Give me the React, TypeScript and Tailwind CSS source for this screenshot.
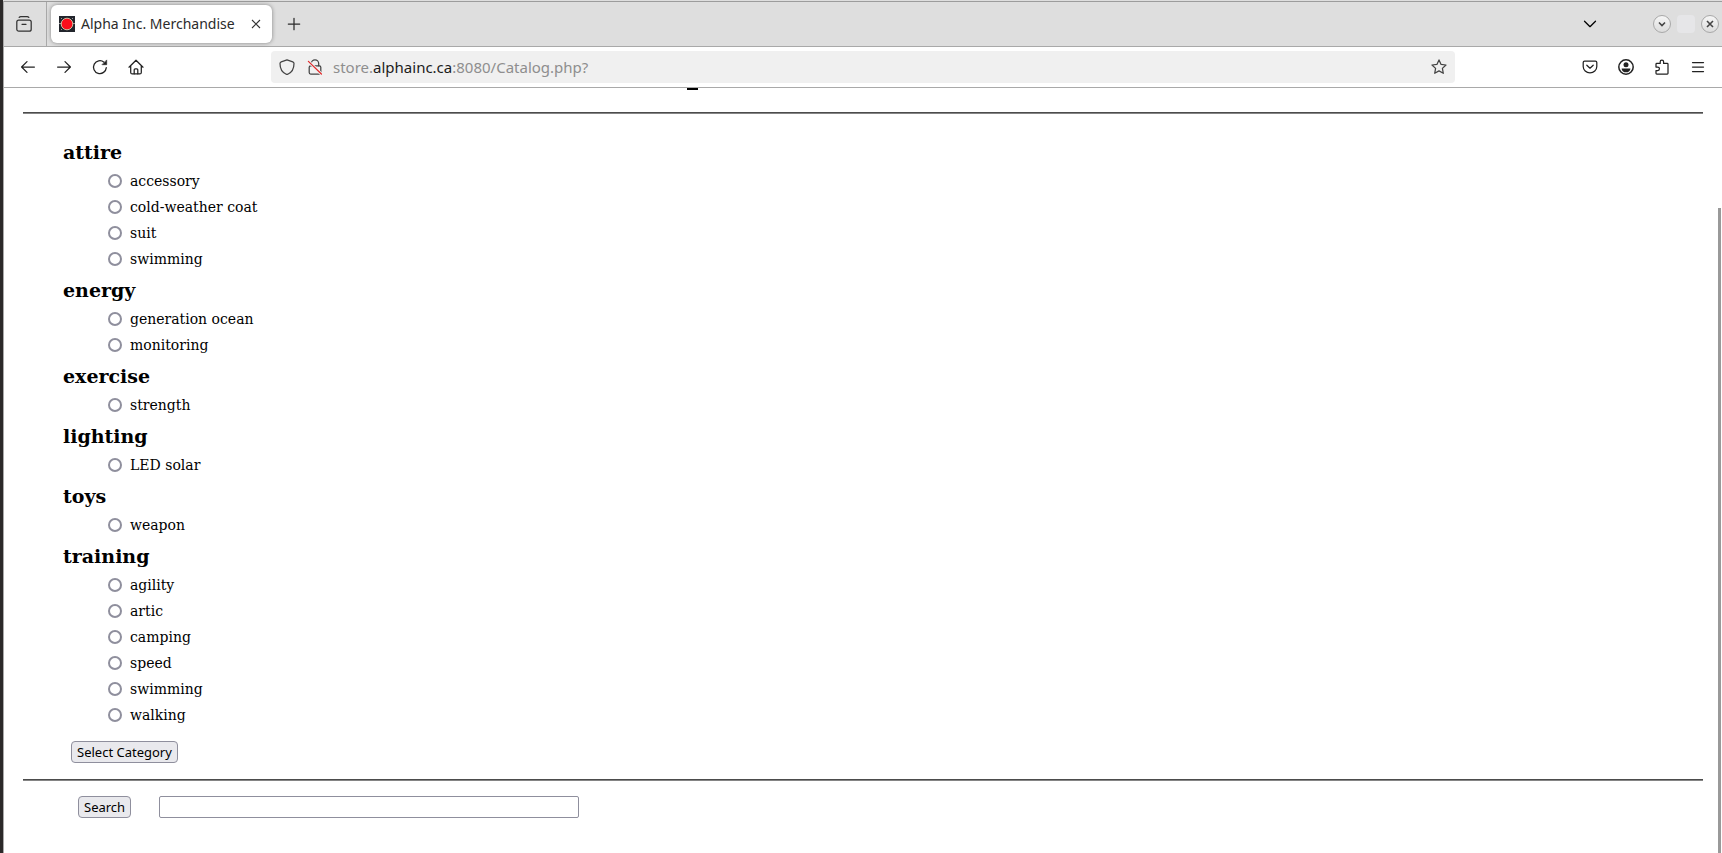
import type { ReactNode } from 'react';

interface Category {
  name: string;
  items: string[];
}

const categories: Category[] = [
  { name: 'attire', items: ['accessory', 'cold-weather coat', 'suit', 'swimming'] },
  { name: 'energy', items: ['generation ocean', 'monitoring'] },
  { name: 'exercise', items: ['strength'] },
  { name: 'lighting', items: ['LED solar'] },
  { name: 'toys', items: ['weapon'] },
  { name: 'training', items: ['agility', 'artic', 'camping', 'speed', 'swimming', 'walking'] },
];

function Icon({ children }: { children: ReactNode }) {
  return (
    <svg
      viewBox="0 0 16 16"
      className="size-4 shrink-0"
      fill="none"
      stroke="currentColor"
      strokeWidth="1.25"
      strokeLinecap="round"
      strokeLinejoin="round"
      aria-hidden="true"
    >
      {children}
    </svg>
  );
}

function ToolButton({ label, children }: { label: string; children: ReactNode }) {
  return (
    <button type="button" aria-label={label} className="flex h-8 w-9 shrink-0 items-center justify-center">
      {children}
    </button>
  );
}

function WindowButton({ label, children }: { label: string; children: ReactNode }) {
  return (
    <button
      type="button"
      aria-label={label}
      className="flex size-[18px] items-center justify-center rounded-full border border-[#a8a8a8] bg-linear-to-b from-[#f6f6f6] to-[#dcdcdc] text-[#444]"
    >
      {children}
    </button>
  );
}

function TabBar() {
  return (
    <div className="flex h-[46px] items-stretch border-t border-b border-t-[#9c9c9c] border-b-[#a9a9a9] bg-[#dedede]">
      <div className="flex w-[43px] items-center justify-center border-r border-[#a9a9a9] pr-0.5 text-[#333]">
        <button type="button" aria-label="Recent browsing">
          <Icon>
            <path d="M3.2 1.4C3.6.9 4.2.7 4.8.7h6.4c.6 0 1.2.2 1.6.7" />
            <rect x=".8" y="4" width="14.4" height="11.2" rx="2" />
            <path d="M6 8.3h4" />
          </Icon>
        </button>
      </div>

      <div className="my-[3px] ml-1 flex w-[221px] items-center rounded-md bg-white px-2 shadow-[0_0_4px_rgba(0,0,0,0.4)]">
        <svg viewBox="0 0 16 16" className="mr-1.5 size-4 shrink-0" aria-hidden="true">
          <rect width="16" height="16" fill="#22252c" />
          <path d="M0 7.5h16M3 3L2 2M13 3l1-1M3 13l-1 1" stroke="#9a9a9a" />
          <circle cx="8" cy="8" r="5.8" fill="#fb0d1b" stroke="#d9c9a8" strokeWidth=".9" />
        </svg>
        <span className="flex-1 whitespace-nowrap text-sm text-[#2b2b2b]">Alpha Inc. Merchandise</span>
        <button type="button" aria-label="Close tab">
          <svg viewBox="0 0 16 16" className="size-4" fill="none" stroke="#333" strokeWidth="1.1" aria-hidden="true">
            <path d="M4 4l8 8M12 4l-8 8" />
          </svg>
        </button>
      </div>

      <div className="ml-1 flex items-center text-[#2b2b2b]">
        <ToolButton label="New tab">
          <Icon>
            <path d="M8 2.3v11.4M2.3 8h11.4" />
          </Icon>
        </ToolButton>
      </div>

      <div className="ml-auto flex items-center">
        <ToolButton label="List all tabs">
          <Icon>
            <path d="M2.5 5.2L8 10.7l5.5-5.5" />
          </Icon>
        </ToolButton>
        <div className="mr-[3px] ml-[45px] flex gap-1.5">
          <WindowButton label="Minimize">
            <svg viewBox="0 0 8 8" className="size-2" fill="none" stroke="currentColor" strokeWidth="1.6" aria-hidden="true">
              <path d="M1 2.5l3 3 3-3" />
            </svg>
          </WindowButton>
          <span className="size-[18px] rounded-sm bg-[#e6e6e8]" />
          <WindowButton label="Close">
            <svg viewBox="0 0 8 8" className="size-2" fill="none" stroke="currentColor" strokeWidth="1.6" aria-hidden="true">
              <path d="M1 1l6 6M7 1L1 7" />
            </svg>
          </WindowButton>
        </div>
      </div>
    </div>
  );
}

function Toolbar() {
  return (
    <div className="flex h-[41px] items-center border-b border-[#a9a9a9] bg-white px-1.5 text-[#222]">
      <ToolButton label="Back">
        <Icon>
          <path d="M14.4 8H1.8M7 2.6L1.6 8 7 13.4" />
        </Icon>
      </ToolButton>
      <ToolButton label="Forward">
        <Icon>
          <path d="M1.6 8h12.6M9 2.6L14.4 8 9 13.4" />
        </Icon>
      </ToolButton>
      <ToolButton label="Reload">
        <Icon>
          <path d="M14.3 8.6A6.4 6.4 0 1 1 12 3.2" />
          <path d="M14.7 1.3v4.4h-4.4z" fill="currentColor" strokeWidth=".6" />
        </Icon>
      </ToolButton>
      <ToolButton label="Home">
        <Icon>
          <path d="M1 8.2L8 1.2l7 7M2.7 6.8v6.6c0 .9.6 1.5 1.5 1.5h7.6c.9 0 1.5-.6 1.5-1.5V6.8" />
          <path d="M6.2 14.8v-4c0-.6.4-1 1-1h1.6c.6 0 1 .4 1 1v4" />
        </Icon>
      </ToolButton>

      <div className="flex-[117]" />
      <div className="flex h-8 flex-[1168] items-center rounded-sm bg-[#f0f0f0] px-2 text-[#444]">
        <Icon>
          <path d="M8 .8l5.8 2c.8.3 1.2.9 1.2 1.7 0 4.8-1.9 8.8-6.2 10.7-.5.2-1.1.2-1.6 0C2.9 13.3 1 9.3 1 4.5c0-.8.4-1.4 1.2-1.7z" />
        </Icon>
        <span className="mr-2.5 ml-3">
          <Icon>
            <path d="M4.3 6.8V4.5a3.7 3.7 0 0 1 7.4 0v2.3" />
            <rect x="2.2" y="6.8" width="11.6" height="8.2" rx="1.5" />
            <path d="M1.4 2.4L14.4 15" stroke="#f0f0f0" strokeWidth="3" />
            <path d="M1.4 2.4L14.4 15" stroke="#e22b2b" />
          </Icon>
        </span>
        <span className="flex-1 whitespace-nowrap text-[15px] text-[#8e8e8e]">
          store.<span className="text-[#1c1c1c]">alphainc.ca</span>:8080/Catalog.php?
        </span>
        <button type="button" aria-label="Bookmark this page">
          <Icon>
            <path d="M8 .9l2.1 4.5 4.9.6-3.6 3.4.9 4.9L8 11.9l-4.3 2.4.9-4.9L1 6l4.9-.6z" />
          </Icon>
        </button>
      </div>
      <div className="flex-[117]" />

      <ToolButton label="Save to Pocket">
        <Icon>
          <path d="M2.6 2h10.8c.8 0 1.4.6 1.4 1.4v4a6.8 6.4 0 0 1-13.6 0v-4C1.2 2.6 1.8 2 2.6 2z" />
          <path d="M4.8 6.2L8 9.2l3.2-3" />
        </Icon>
      </ToolButton>
      <ToolButton label="Account">
        <Icon>
          <circle cx="8" cy="8" r="7.2" strokeWidth="1.5" />
          <circle cx="8" cy="5.7" r="2.5" fill="currentColor" stroke="none" />
          <path d="M3.6 9.4h8.8c0 2.4-1.8 3.9-4.4 3.9s-4.4-1.5-4.4-3.9z" fill="currentColor" stroke="none" />
        </Icon>
      </ToolButton>
      <ToolButton label="Extensions">
        <Icon>
          <path d="M2 8V5.2c0-.5.3-.8.8-.8h3.4V2.7a1.7 1.7 0 0 1 3.4 0v1.7h3.6c.5 0 .8.3.8.8v9c0 .5-.3.8-.8.8H2.8c-.5 0-.8-.3-.8-.8v-2.7h1.7a1.75 1.75 0 0 0 0-3.5z" />
        </Icon>
      </ToolButton>
      <ToolButton label="Open application menu">
        <Icon>
          <path d="M2.5 3.5h11M2.5 8h11M2.5 12.5h11" />
        </Icon>
      </ToolButton>
    </div>
  );
}

function Rule() {
  return <hr className="h-0 border-t border-b border-t-[#4c4c4c] border-b-[#858585]" />;
}

function FormButton({ className, children }: { className?: string; children: ReactNode }) {
  return (
    <button
      type="submit"
      className={`block h-[22px] rounded-sm border border-[#8f8f9d] bg-[#e9e9ed] px-[5px] font-['Noto_Sans',sans-serif] text-[13px]/5 text-black ${className ?? ''}`}
    >
      {children}
    </button>
  );
}

function CategoryForm() {
  return (
    <form className="pt-5 pl-10" onSubmit={(e) => e.preventDefault()}>
      {categories.map((category) => (
        <section key={category.name}>
          <h2 className="h-[34px] text-[19px]/9 font-bold">{category.name}</h2>
          <ul className="pl-[45px] text-sm">
            {category.items.map((item) => (
              <li key={item}>
                <label className="flex h-[26px] items-center gap-2">
                  <input
                    type="radio"
                    name="category"
                    value={`${category.name}/${item}`}
                    className="size-3.5 appearance-none rounded-full border-2 border-[#8f8f9d] bg-white checked:border-4"
                  />
                  {item}
                </label>
              </li>
            ))}
          </ul>
        </section>
      ))}
      <FormButton className="mt-[13px] ml-2">Select Category</FormButton>
    </form>
  );
}

function SearchForm() {
  return (
    <form className="flex items-center pt-[15px] pb-8 pl-[55px]" onSubmit={(e) => e.preventDefault()}>
      <FormButton>Search</FormButton>
      <input
        type="text"
        name="search"
        aria-label="Search"
        className="ml-7 h-[22px] w-[420px] rounded-xs border border-[#8f8f9d] bg-white px-1 text-[13px]"
      />
    </form>
  );
}

export default function App() {
  return (
    <div className="flex min-h-screen flex-col border-l-[3px] border-[#2b2929] bg-[#dedede] pt-px font-['Noto_Sans','Open_Sans',sans-serif]">
      <header className="border-l border-[#a9a9a9]">
        <TabBar />
        <Toolbar />
      </header>
      <main className="relative flex-1 border-l border-[#a9a9a9] bg-white px-[19px] font-['DejaVu_Serif',serif] text-black">
        {/* tail of the page title, scrolled out of view */}
        <div className="h-6">
          <div className="ml-[39.5%] h-0.5 w-[11px] bg-black" />
        </div>
        <Rule />
        <CategoryForm />
        <div className="pt-4">
          <Rule />
        </div>
        <SearchForm />
        <div className="absolute top-[120px] right-px bottom-0 w-[3px] bg-[#999]" />
      </main>
    </div>
  );
}
